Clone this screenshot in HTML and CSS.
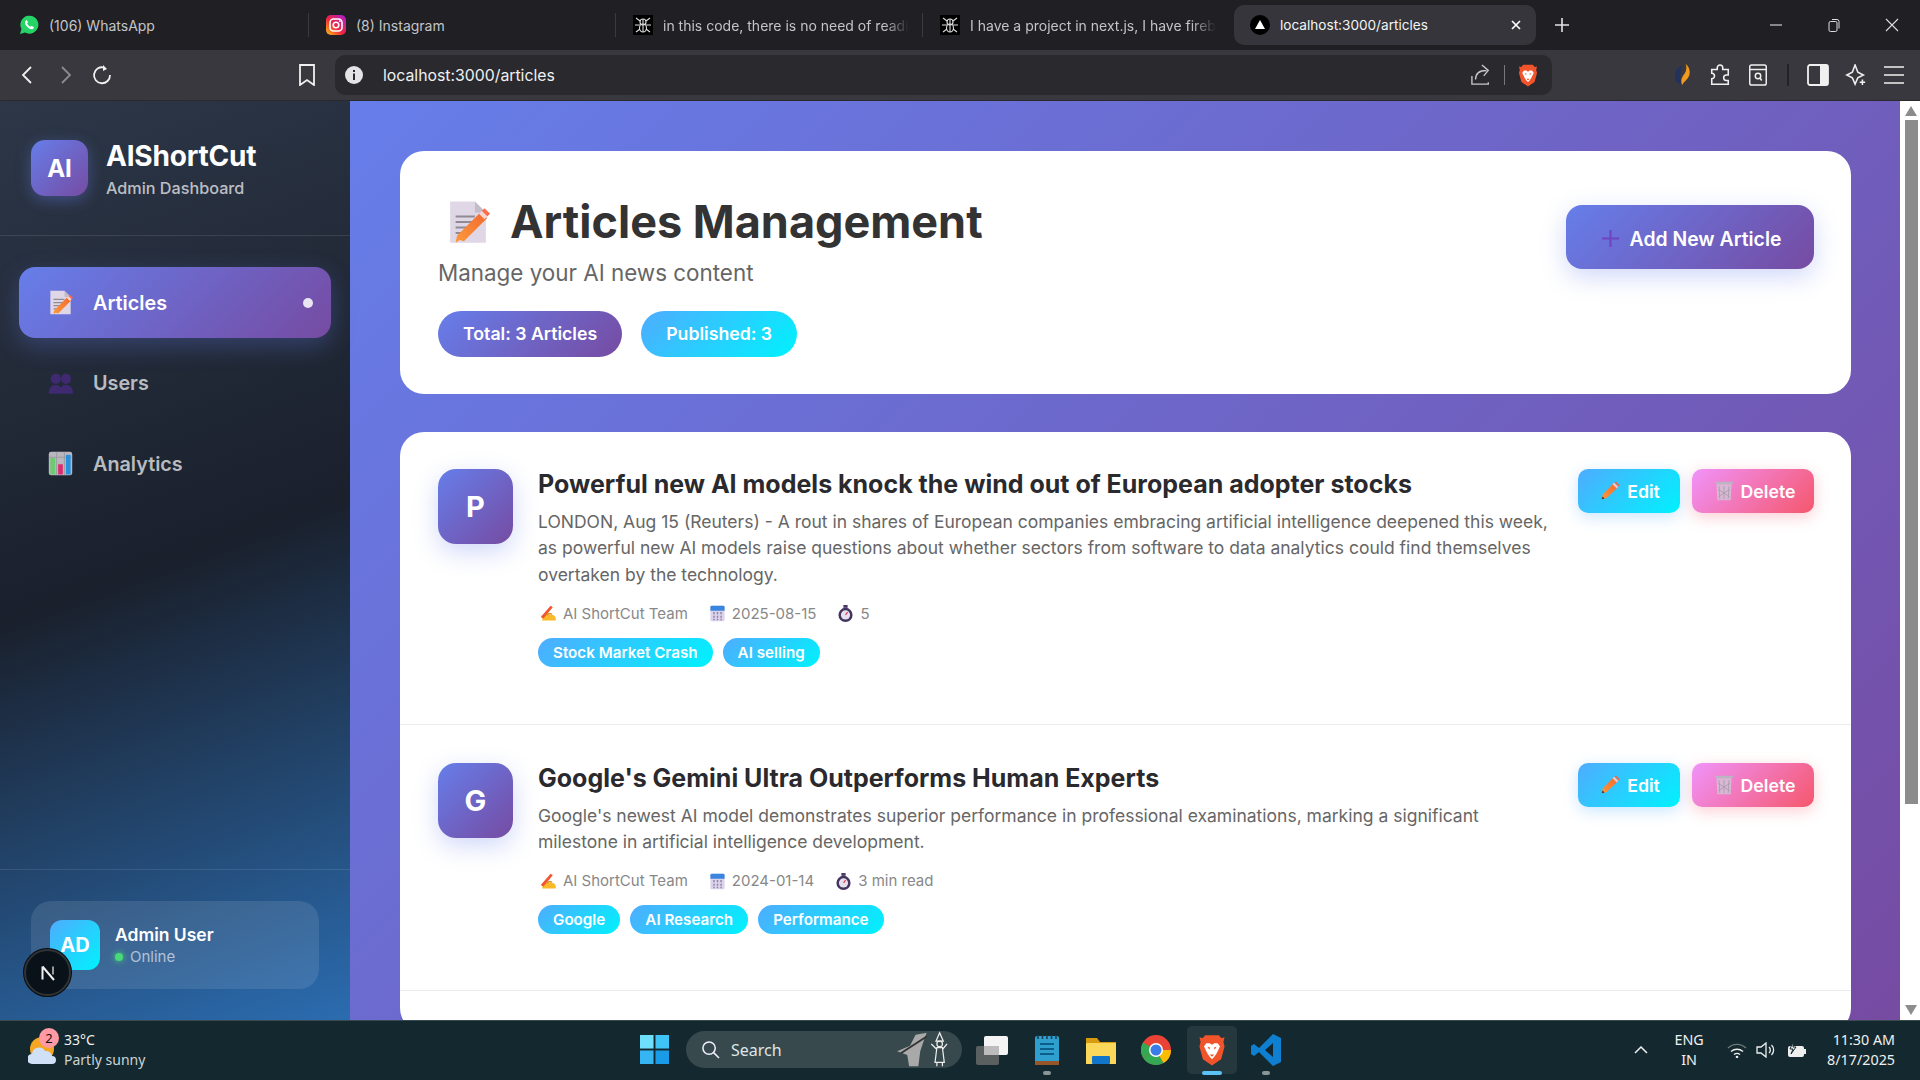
FILE: index.html
```html
<!DOCTYPE html>
<html lang="en">
<head>
<meta charset="utf-8">
<title>Articles Management</title>
<link rel="stylesheet" href="styles.css">
</head>
<body>
<svg class="defs" width="0" height="0" aria-hidden="true">
  <defs>
    <linearGradient id="pen" x1="0" y1="1" x2="1" y2="0"><stop offset="0" stop-color="#fb9a3c"/><stop offset="1" stop-color="#f4672f"/></linearGradient>
    <linearGradient id="ig" x1="0" y1="1" x2="1" y2="0"><stop offset="0" stop-color="#fdc30f"/><stop offset=".45" stop-color="#f0243f"/><stop offset="1" stop-color="#a51fd8"/></linearGradient>
    <symbol id="i-doc" viewBox="0 0 32 32">
      <path d="M3 1h18l8 8v22H3z" fill="#dfd7e6"/><path d="M21 1l8 8h-8z" fill="#c3bcca"/>
      <path d="M7 12h14M7 16h14M7 20h10M7 24h6" stroke="#8f8a94" stroke-width="1.6"/>
      <path d="M10 29l-3 2 1-5L25 9l5 4-17 17z" fill="url(#pen)"/><path d="M26 8l2-2 4 4-2 2z" fill="#ff6a4a"/><path d="M24 10l2-2 4 4-2 2z" fill="#f4d6d6"/>
    </symbol>
    <symbol id="i-users" viewBox="0 0 32 32">
      <g fill="#3f2a72"><circle cx="10" cy="10" r="6.500"/><circle cx="23" cy="10" r="6.500"/><path d="M1 29c0-8 4-11 9-11s8 3 7 11z"/><path d="M15 29c0-8 3-11 8-11s9 3 9 11z"/></g>
    </symbol>
    <symbol id="i-chart" viewBox="0 0 32 32">
      <rect x="1" y="1" width="30" height="30" rx="3" fill="#b9b6be"/><path d="M11 1v30M21 1v30M1 8h30" stroke="#98959c" stroke-width="1"/>
      <rect x="3" y="9" width="6" height="21" fill="#6cca70"/><rect x="13" y="17" width="6" height="13" fill="#d92d6f"/><rect x="23" y="5" width="6" height="25" fill="#2890dc"/>
    </symbol>
    <symbol id="i-pencil" viewBox="0 0 24 24">
      <path d="M2 22l1.500-6L16 3l5 5L8 20.500z" fill="url(#pen)"/><path d="M15 4l2-2 5 5-2 2z" fill="#f4c6c6"/><path d="M17.500 1.500L19 .5l4.500 4.500-1 2z" fill="#f4633f"/><path d="M2 22l1-3.500 2.500 2.500z" fill="#40302a"/>
    </symbol>
    <symbol id="i-trash" viewBox="0 0 24 24">
      <path d="M1 1h22l-1 3H2z" fill="#b9b5c2"/><path d="M3 4h18l-1 19H4z" fill="#d9b8d4"/><path d="M6 6l1 16M12 6v16M18 6l-1 16M5 10l14 9M19 10L5 19" stroke="#a89bae" stroke-width="1"/>
    </symbol>
    <symbol id="i-hand" viewBox="0 0 24 24">
      <path d="M3 22c0-5 3-8 7-9l9 1c3 2 4 5 3 8z" fill="#fbb829"/><path d="M1 17L15 1l3 2L5 19z" fill="#f0552f"/><path d="M10 14c2-2 5-2 7-1" stroke="#d78a10" stroke-width="2" fill="none"/>
    </symbol>
    <symbol id="i-cal" viewBox="0 0 24 24">
      <rect x="2" y="1" width="20" height="22" rx="2" fill="#dcd2ea"/><path d="M2 8V3a2 2 0 0 1 2-2h16a2 2 0 0 1 2 2v5z" fill="#3a85e0"/>
      <path d="M6 10h2v3H6zM11 10h2v3h-2zM16 10h2v3h-2zM6 15h2v3H6zM11 15h2v3h-2zM16 15h2v3h-2zM6 19.500h2v2H6zM11 19.500h2v2h-2zM16 19.500h2v2h-2z" fill="#8c82a8"/>
    </symbol>
    <symbol id="i-watch" viewBox="0 0 24 24">
      <rect x="9" y="0" width="6" height="4" fill="#4a3a68"/><circle cx="12" cy="14" r="10" fill="#43335f"/><circle cx="12" cy="14" r="6.500" fill="#e6e0ee"/><path d="M12 14l3-4" stroke="#e33d5a" stroke-width="1.800"/>
    </symbol>
    <symbol id="i-spider" viewBox="0 0 20 20">
      <rect width="20" height="20" fill="#000"/><g stroke="#ddd" stroke-width="1.100" fill="none"><circle cx="10" cy="7" r="3"/><ellipse cx="10" cy="13" rx="3.500" ry="4"/><path d="M10 4v13M3 3l4 3M17 3l-4 3M2 10h5M18 10h-5M3 17l4-3M17 17l-4-3"/></g>
    </symbol>
    <symbol id="i-brave" viewBox="0 0 24 28">
      <path d="M6 1h12l2 2.500 3-.5-1 4 1 4-3 11-8 5.500L4 22 1 11l1-4-1-4 3 .5z" fill="#f1532a"/>
      <path d="M7 8h3l2 1.500L14 8h3l2 3-3 6-2 3-2 2-2-2-2-3-3-6z" fill="#fff"/><path d="M8 11l2.500 1-1 1.500zM16 11l-2.500 1 1 1.500zM10 18h4l-2 2z" fill="#f1532a"/>
    </symbol>
  </defs>
</svg>

<div class="tabbar">
  <div class="tab">
    <svg class="fav" viewBox="0 0 20 20"><path d="M1 19l1.500-5A9 9 0 1 1 6 17.500z" fill="#25d366"/><path d="M7 5.500c-1.500 1-1.500 3 .5 5.500s4.500 4 6.500 3l1-1.800-2.500-1.400-1.200 1c-1.500-.7-2.500-2-3.200-3.300l.9-1.200L7.800 5z" fill="#fff"/></svg>
    <span class="tab-title">(106) WhatsApp</span>
  </div>
  <div class="tab">
    <svg class="fav" viewBox="0 0 20 20"><rect width="20" height="20" rx="5" fill="url(#ig)"/><rect x="4" y="4" width="12" height="12" rx="3.500" fill="none" stroke="#fff" stroke-width="1.600"/><circle cx="10" cy="10" r="2.800" fill="none" stroke="#fff" stroke-width="1.600"/><circle cx="13.800" cy="6.200" r=".9" fill="#fff"/></svg>
    <span class="tab-title">(8) Instagram</span>
  </div>
  <div class="tab">
    <svg class="fav"><use href="#i-spider"/></svg>
    <span class="tab-title tab-fade">in this code, there is no need of readi</span>
  </div>
  <div class="tab tab-last">
    <svg class="fav"><use href="#i-spider"/></svg>
    <span class="tab-title tab-fade">I have a project in next.js, I have fireb</span>
  </div>
  <div class="tab-active">
    <svg class="fav" viewBox="0 0 20 20"><circle cx="10" cy="10" r="10" fill="#000"/><path d="M10 5l5 9H5z" fill="#fff"/></svg>
    <span class="tab-title tab-title-active">localhost:3000/articles</span>
    <svg class="tab-x" viewBox="0 0 12 12"><path d="M2 2l8 8M10 2l-8 8" stroke="#fff" stroke-width="1.700"/></svg>
  </div>
  <svg class="tab-new" viewBox="0 0 14 14"><path d="M7 0v14M0 7h14" stroke="#e4e4e4" stroke-width="1.600"/></svg>
  <div class="win-ctrls">
    <svg class="win" viewBox="0 0 14 14"><path d="M1 7h12" stroke="#ddd" stroke-width="1.100"/></svg>
    <svg class="win" viewBox="0 0 14 14"><rect x="2" y="3.500" width="8" height="10" rx="1.500" fill="none" stroke="#ddd"/><path d="M5 1.500h5a2 2 0 0 1 2 2v7" fill="none" stroke="#ddd"/></svg>
    <svg class="win" viewBox="0 0 14 14"><path d="M1 1l12 12M13 1L1 13" stroke="#ddd" stroke-width="1.100"/></svg>
  </div>
</div>

<div class="toolbar">
  <div class="nav-btns">
    <svg class="tb-ic" viewBox="0 0 20 20"><path d="M13 2L5 10l8 8" fill="none" stroke="#f0f0f0" stroke-width="1.800"/></svg>
    <svg class="tb-ic" viewBox="0 0 20 20"><path d="M7 2l8 8-8 8" fill="none" stroke="#8b8b90" stroke-width="1.800"/></svg>
    <svg class="tb-ic" viewBox="0 0 20 20"><path d="M12 2.500A8 8 0 1 0 18 10" fill="none" stroke="#f0f0f0" stroke-width="1.800"/><path d="M11 0v6l4-2z" fill="#f0f0f0"/></svg>
  </div>
  <svg class="tb-book" viewBox="0 0 18 22"><path d="M2 1h14v20l-7-5-7 5z" fill="none" stroke="#f0f0f0" stroke-width="1.800"/></svg>
  <div class="address">
    <svg class="info" viewBox="0 0 18 18"><circle cx="9" cy="9" r="9" fill="#e4e4e6"/><path d="M8 4h2v2H8zM8 7.500h2V14H8z" fill="#29292e"/></svg>
    <span class="url">localhost:3000/articles</span>
    <svg class="share" viewBox="0 0 22 24"><path d="M1 13v9h18v-2M5 17c0-7 5-10 12-10M12 1l7 6-5 6" fill="none" stroke="#c8c8cc" stroke-width="1.500"/></svg>
    <span class="addr-sep"></span>
    <svg class="brave-small"><use href="#i-brave"/></svg>
  </div>
  <div class="ext">
    <svg class="ext-sol" viewBox="0 0 20 26"><path d="M9 3C3 5 0 11 2 18c1 3 4 5 7 6-2-5-3-15 0-21z" fill="#21325f"/><path d="M13 1c5 4 6 12 1 17-2 2-4 4-5 6-2-6 0-9 3-13 2-3 2-7 1-10z" fill="#f29a1f"/></svg>
    <svg class="ext-ic" viewBox="0 0 22 24"><path d="M8 4a3 3 0 0 1 6 0v2h6v6h-2a3 3 0 0 0 0 6h2v4H2v-6a3 3 0 0 0 0-6V6h6z" fill="none" stroke="#f0f0f0" stroke-width="1.700"/></svg>
    <svg class="ext-ic" viewBox="0 0 20 24"><rect x="1" y="1" width="18" height="22" rx="2" fill="none" stroke="#f0f0f0" stroke-width="1.600"/><path d="M1 6h18" stroke="#f0f0f0" stroke-width="1.600"/><circle cx="10" cy="13" r="3" fill="none" stroke="#f0f0f0" stroke-width="1.600"/><path d="M12 15l2 3" stroke="#f0f0f0" stroke-width="1.600"/></svg>
    <span class="ext-sep"></span>
    <svg class="ext-ic" viewBox="0 0 22 22"><rect x="1" y="1" width="20" height="20" rx="2" fill="none" stroke="#f0f0f0" stroke-width="1.800"/><rect x="13" y="1" width="8" height="20" fill="#f0f0f0"/></svg>
    <svg class="ext-ic" viewBox="0 0 22 24"><path d="M10 1l3 8 6 3-6 3-3 7-3-7-6-3 6-3z" fill="none" stroke="#f0f0f0" stroke-width="1.700"/><path d="M18 17v6M15 20h6" stroke="#f0f0f0" stroke-width="1.700"/></svg>
    <svg class="ext-ic" viewBox="0 0 22 20"><path d="M1 2h20M1 10h20M1 18h20" stroke="#f0f0f0" stroke-width="1.700"/></svg>
  </div>
</div>

<div class="page">
  <aside class="sidebar">
    <div class="brand">
      <div class="brand-logo">AI</div>
      <div>
        <div class="brand-name">AIShortCut</div>
        <div class="brand-sub">Admin Dashboard</div>
      </div>
    </div>
    <nav class="menu">
      <a class="menu-item menu-active"><svg class="menu-ic"><use href="#i-doc"/></svg><span>Articles</span><i class="menu-dot"></i></a>
      <a class="menu-item"><svg class="menu-ic"><use href="#i-users"/></svg><span>Users</span></a>
      <a class="menu-item"><svg class="menu-ic"><use href="#i-chart"/></svg><span>Analytics</span></a>
    </nav>
    <div class="side-foot">
      <div class="user-card">
        <div class="user-av">AD</div>
        <div class="user-info">
          <div class="user-name">Admin User</div>
          <div class="user-status"><i class="status-dot"></i>Online</div>
        </div>
      </div>
    </div>
    <div class="next-badge">
      <svg viewBox="0 0 20 20"><path d="M4.500 3.500v13M4.500 3.500L16 17" stroke="#f0f0f0" stroke-width="2" fill="none"/><path d="M15 3.500v8" stroke="#999" stroke-width="2"/></svg>
    </div>
  </aside>

  <main class="main">
    <section class="hero card">
      <div>
        <h1 class="hero-title"><svg class="hero-ic"><use href="#i-doc"/></svg>Articles Management</h1>
        <p class="hero-sub">Manage your AI news content</p>
        <div class="hero-stats">
          <span class="stat stat-purple">Total: 3 Articles</span>
          <span class="stat stat-blue">Published: 3</span>
        </div>
      </div>
      <button class="btn-add"><svg class="add-ic" viewBox="0 0 20 20"><path d="M10 0v20M0 10h20" stroke="#6d45c0" stroke-width="2.400"/></svg><span>Add New Article</span></button>
    </section>

    <section class="list card">
      <article class="item">
        <div class="item-av">P</div>
        <div class="item-body">
          <h2 class="item-title">Powerful new AI models knock the wind out of European adopter stocks</h2>
          <p class="item-text">LONDON, Aug 15 (Reuters) - A rout in shares of European companies embracing artificial intelligence deepened this week, as powerful new AI models raise questions about whether sectors from software to data analytics could find themselves overtaken by the technology.</p>
          <div class="meta">
            <span class="meta-i"><svg class="meta-ic"><use href="#i-hand"/></svg>AI ShortCut Team</span>
            <span class="meta-i"><svg class="meta-ic"><use href="#i-cal"/></svg>2025-08-15</span>
            <span class="meta-i"><svg class="meta-ic"><use href="#i-watch"/></svg>5</span>
          </div>
          <div class="tags"><span class="tag">Stock Market Crash</span><span class="tag">AI selling</span></div>
        </div>
        <div class="actions">
          <button class="btn btn-edit"><svg class="btn-ic"><use href="#i-pencil"/></svg>Edit</button>
          <button class="btn btn-del"><svg class="btn-ic"><use href="#i-trash"/></svg>Delete</button>
        </div>
      </article>
      <article class="item">
        <div class="item-av">G</div>
        <div class="item-body">
          <h2 class="item-title">Google's Gemini Ultra Outperforms Human Experts</h2>
          <p class="item-text">Google's newest AI model demonstrates superior performance in professional examinations, marking a significant milestone in artificial intelligence development.</p>
          <div class="meta">
            <span class="meta-i"><svg class="meta-ic"><use href="#i-hand"/></svg>AI ShortCut Team</span>
            <span class="meta-i"><svg class="meta-ic"><use href="#i-cal"/></svg>2024-01-14</span>
            <span class="meta-i"><svg class="meta-ic"><use href="#i-watch"/></svg>3 min read</span>
          </div>
          <div class="tags"><span class="tag">Google</span><span class="tag">AI Research</span><span class="tag">Performance</span></div>
        </div>
        <div class="actions">
          <button class="btn btn-edit"><svg class="btn-ic"><use href="#i-pencil"/></svg>Edit</button>
          <button class="btn btn-del"><svg class="btn-ic"><use href="#i-trash"/></svg>Delete</button>
        </div>
      </article>
    </section>
  </main>

  <div class="scrollbar">
    <svg class="sb-arrow" viewBox="0 0 12 10"><path d="M6 0l6 10H0z" fill="#8c8c8c"/></svg>
    <div class="sb-thumb"></div>
    <svg class="sb-arrow" viewBox="0 0 12 10"><path d="M6 10L0 0h12z" fill="#8c8c8c"/></svg>
  </div>
</div>

<footer class="taskbar">
  <div class="tb-left">
    <div class="weather">
      <svg class="weather-ic" viewBox="0 0 28 30"><circle cx="14" cy="14" r="12" fill="#f5a623"/><path d="M4 29a5 5 0 0 1 0-10 7 7 0 0 1 13-3 6 6 0 0 1 7 5 4 4 0 0 1 0 8z" fill="#cfe0f7"/></svg>
      <span class="weather-badge">2</span>
    </div>
    <div class="weather-text"><div>33°C</div><div class="weather-sub">Partly sunny</div></div>
  </div>
  <div class="tb-center">
    <svg class="start" viewBox="0 0 30 30"><path d="M0 0h14v14H0z" fill="#6fe0fb"/><path d="M16 0h14v14H16z" fill="#3fc4f5"/><path d="M0 16h14v14H0z" fill="#35b6f2"/><path d="M16 16h14v14H16z" fill="#1a9be8"/></svg>
    <div class="search">
      <svg class="search-ic" viewBox="0 0 20 20"><circle cx="8.500" cy="8.500" r="6.500" fill="none" stroke="#eef" stroke-width="1.600"/><path d="M13 13l6 6" stroke="#eef" stroke-width="1.600"/></svg>
      <span>Search</span>
      <svg class="search-art" viewBox="0 0 60 40"><path d="M2 22l14-6 6-12 12-2-3 8-4 12-2 16H15l-2-12z" fill="#a9a9a9"/><path d="M6 24L34 6" stroke="#333" stroke-width="2"/><g fill="none" stroke="#eee" stroke-width="1.300"><path d="M48 2l-4 9h8z"/><circle cx="48" cy="14" r="3"/><path d="M45 18h6l2 16h-10zM45 20l-6-6M51 20l5-6M45 34v4M51 34v4"/></g></svg>
    </div>
    <span class="tb-app tb-task"><svg viewBox="0 0 34 30" width="34" height="30"><rect x="1" y="11" width="23" height="19" rx="2" fill="#5a5f60"/><rect x="9" y="1" width="24" height="19" rx="2" fill="#f4f4f4"/><rect x="9" y="11" width="15" height="9" fill="#bcbcbc"/></svg></span>
    <span class="tb-app tb-note"><svg viewBox="0 0 24 32" width="24" height="32"><rect y="2" width="24" height="29" rx="2" fill="#2f9fd0"/><rect y="27" width="24" height="4" fill="#96562a"/><path d="M5 10h14M5 15h14M5 20h14" stroke="#0b5f8a" stroke-width="2"/><path d="M3 1v4M7.500 1v4M12 1v4M16.500 1v4M21 1v4" stroke="#1d3a4a" stroke-width="1.500"/></svg><i class="run"></i></span>
    <span class="tb-app tb-folder"><svg viewBox="0 0 30 28" width="30" height="28"><path d="M0 2h11l3 4h16v22H0z" fill="#d89b10"/><rect y="7" width="30" height="21" rx="1" fill="#fbd75a"/><rect x="6" y="20" width="18" height="8" rx="1" fill="#1176c9"/></svg></span>
    <span class="tb-app tb-chrome"><svg viewBox="0 0 30 30" width="30" height="30"><circle cx="15" cy="15" r="15" fill="#ea4335"/><path d="M15 15L2 22.500A15 15 0 0 1 2 7.500z" fill="#34a853"/><path d="M2 22.500L15 15l7.500 13A15 15 0 0 1 2 22.500z" fill="#34a853"/><path d="M15 15h15a15 15 0 0 1-7.500 13z" fill="#fbbc04"/><circle cx="15" cy="15" r="7" fill="#fff"/><circle cx="15" cy="15" r="5.500" fill="#3b7de8"/></svg></span>
    <span class="tb-app tb-brave"><svg class="brave-tb"><use href="#i-brave"/></svg><i class="run run-active"></i></span>
    <span class="tb-app tb-code"><svg viewBox="0 0 30 32" width="30" height="32"><path d="M22 0l8 4v24l-8 4L8 18l-5 4-3-2v-8l3-2 5 4z" fill="#0f7fd2"/><path d="M22 9l-8 7 8 7z" fill="#12262d"/></svg><i class="run"></i></span>
  </div>
  <div class="tray">
    <svg class="tray-chev" viewBox="0 0 14 8"><path d="M1 7l6-6 6 6" fill="none" stroke="#eee" stroke-width="1.500"/></svg>
    <div class="tray-lang"><div>ENG</div><div>IN</div></div>
    <svg class="tray-ic tray-wifi" viewBox="0 0 20 16"><path d="M1 6a13 13 0 0 1 18 0" fill="none" stroke="#6c7a7c" stroke-width="1.400"/><path d="M4 9.500a9 9 0 0 1 12 0M7 12.500a5 5 0 0 1 6 0" fill="none" stroke="#eee" stroke-width="1.400"/><circle cx="10" cy="15" r="1.300" fill="#eee"/></svg>
    <svg class="tray-ic" viewBox="0 0 20 16"><path d="M1 5h4l5-4v14l-5-4H1z" fill="none" stroke="#eee" stroke-width="1.300"/><path d="M13 5a4 4 0 0 1 0 6M15.500 3a7 7 0 0 1 0 10" fill="none" stroke="#eee" stroke-width="1.300"/></svg>
    <svg class="tray-ic" viewBox="0 0 20 16"><rect x="1" y="4" width="16" height="11" rx="2" fill="#eee"/><rect x="17" y="7" width="2" height="5" fill="#eee"/><path d="M6 0L3 7h3l-2 5 5-7H6z" fill="#eee" stroke="#14292f"/></svg>
    <div class="tray-clock"><div>11:30 AM</div><div>8/17/2025</div></div>
  </div>
</footer>
</body>
</html>
```

FILE: styles.css
```css
* { box-sizing: border-box; }
html, body { margin: 0; height: 100%; overflow: hidden; }
body { font-family: Inter, "Noto Sans", sans-serif; display: flex; flex-direction: column; background: #14292f; }
.defs { position: absolute; }
p, h1, h2 { margin: 0; }

/* browser chrome */
.tabbar { height: 50px; background: #1f1f24; display: flex; align-items: center; padding-left: 2px; flex: none; }
.tab { width: 307px; height: 24px; padding-left: 17px; display: flex; align-items: center; border-right: 1px solid #3a3a40; }
.tab-last { border-right: 0; width: 311px; }
.fav { width: 20px; height: 20px; flex: none; }
.tab-title { margin-left: 10px; font-size: 14px; color: #c4c4c8; white-space: nowrap; }
.tab-fade { -webkit-mask-image: linear-gradient(90deg, #000 90%, transparent); mask-image: linear-gradient(90deg, #000 90%, transparent); }
.tab-active { width: 302px; height: 40px; margin-top: -1px; background: #35353b; border-radius: 10px; display: flex; align-items: center; padding-left: 16px; }
.tab-title-active { color: #f4f4f4; flex: 1; font-size: 13.600px; }
.tab-x { width: 12px; height: 12px; margin-right: 14px; }
.tab-new { width: 14px; height: 14px; margin-left: 19px; }
.win-ctrls { margin-left: auto; display: flex; gap: 44px; padding-right: 21px; }
.win { width: 14px; height: 14px; display: block; }

.toolbar { height: 51px; background: #38383e; border-bottom: 1px solid #29292e; display: flex; align-items: center; flex: none; padding-left: 18px; }
.nav-btns { display: flex; gap: 17px; width: 280px; }
.tb-ic { width: 20px; height: 20px; }
.tb-book { width: 18px; height: 22px; }
.address { width: 1217px; height: 40px; margin-left: 19px; background: #29292e; border-radius: 10px; display: flex; align-items: center; padding: 0 14px 0 10px; flex: none; }
.info { width: 18px; height: 18px; }
.url { margin-left: 20px; font-size: 15.800px; color: #f0f0f0; flex: 1; }
.share { width: 20px; height: 22px; }
.addr-sep { width: 1px; height: 20px; background: #77777c; margin: 0 13px; }
.brave-small { width: 20px; height: 23px; }
.ext { display: flex; align-items: center; gap: 16px; margin-left: 122px; }
.ext-sol { width: 20px; height: 24px; margin-left: -1px; }
.ext-ic { width: 22px; height: 22px; }
.ext-sep { width: 2px; height: 22px; background: #232327; margin: 0 2px; }

/* page */
.page { flex: 1; display: flex; min-height: 0; position: relative; }
.sidebar { width: 350px; flex: none; display: flex; flex-direction: column; background: linear-gradient(160deg, #2d3748 0%, #1a202c 50%, #2b6cb0 100%); position: relative; }
.brand { height: 135px; flex: none; padding: 39px 31px 0; display: flex; gap: 18px; border-bottom: 1px solid rgba(255, 255, 255, .1); }
.brand-logo { width: 57px; height: 56px; border-radius: 14px; background: linear-gradient(135deg, #667eea, #764ba2); box-shadow: 0 4px 15px rgba(102, 126, 234, .4); display: flex; align-items: center; justify-content: center; color: #fff; font-size: 24px; font-weight: 700; }
.brand-name { font-size: 28px; font-weight: 700; color: #fff; line-height: 34px; margin-top: -1px; letter-spacing: -.2px; }
.brand-sub { font-size: 16.200px; font-weight: 500; color: rgba(255, 255, 255, .7); line-height: 20px; margin-top: 5px; }
.menu { flex: 1; padding: 31px 19px 0; display: flex; flex-direction: column; gap: 9.500px; }
.menu-item { height: 71px; border-radius: 16px; display: flex; align-items: center; padding-left: 29px; gap: 20px; font-size: 19.800px; font-weight: 600; color: rgba(255, 255, 255, .7); }
.menu-active { color: #fff; background: linear-gradient(135deg, #667eea, #764ba2); box-shadow: 0 8px 25px rgba(102, 126, 234, .3); }
.menu-ic { width: 25px; height: 25px; flex: none; }
.menu-dot { width: 10px; height: 10px; border-radius: 50%; background: rgba(255, 255, 255, .85); margin-left: auto; margin-right: 18px; }
.side-foot { flex: none; height: 151px; border-top: 1px solid rgba(255, 255, 255, .1); padding: 31px 31px 0; }
.user-card { height: 88px; border-radius: 20px; background: rgba(255, 255, 255, .1); display: flex; align-items: center; padding-left: 19px; gap: 15px; }
.user-av { width: 50px; height: 50px; border-radius: 12px; background: linear-gradient(135deg, #4facfe, #00f2fe); display: flex; align-items: center; justify-content: center; color: #fff; font-size: 20px; font-weight: 700; }
.user-info { padding-top: 2px; }
.user-name { font-size: 17.500px; font-weight: 600; color: #fff; line-height: 22px; }
.user-status { font-size: 15px; color: rgba(255, 255, 255, .6); line-height: 22px; display: flex; align-items: center; gap: 7px; }
.status-dot { width: 8px; height: 8px; border-radius: 50%; background: #48d978; box-shadow: 0 0 6px #48d978; }
.next-badge { position: absolute; left: 24px; bottom: 24px; width: 47px; height: 47px; border-radius: 50%; background: #0a1219; border: 2px solid #2e3338; box-shadow: 0 0 0 1px #0a0a0a; display: flex; align-items: center; justify-content: center; }
.next-badge svg { width: 20px; height: 20px; }

.main { flex: 1; min-width: 0; overflow: hidden; padding: 50px 49px 0 50px; background: linear-gradient(135deg, #667eea 0%, #764ba2 100%); }
.card { background: #fff; border-radius: 24px; }
.hero { height: 243px; padding: 38px 37px 37px 38px; display: flex; justify-content: space-between; align-items: flex-start; margin-bottom: 38px; }
.hero-title { font-size: 45px; font-weight: 700; line-height: 66px; color: #333; display: flex; align-items: center; }
.hero-ic { width: 44px; height: 44px; margin: 0 20px 0 8px; flex: none; }
.hero-sub { font-size: 22.400px; line-height: 28px; color: #666; margin-top: 4px; }
.hero-stats { display: flex; gap: 19px; margin-top: 23.500px; }
.stat { height: 46px; border-radius: 23px; padding: 0 25px; display: flex; align-items: center; color: #fff; font-size: 17.700px; font-weight: 600; }
.stat-purple { background: linear-gradient(135deg, #667eea, #764ba2); }
.stat-blue { background: linear-gradient(135deg, #4facfe, #00f2fe); }
.btn-add { width: 248px; height: 64px; margin-top: 16px; padding: 3px 0 0 3px; border: 0; border-radius: 16px; background: linear-gradient(135deg, #667eea, #764ba2); box-shadow: 0 8px 25px rgba(102, 126, 234, .3); color: #fff; font: 600 19.400px Inter, sans-serif; display: flex; align-items: center; justify-content: center; gap: 11px; }
.add-ic { width: 17px; height: 17px; }

.list { min-height: 600px; }
.item { display: flex; padding: 37px 37px 0 38px; height: 293px; border-bottom: 1px solid #e9ecef; }
.item + .item { height: 266px; padding-top: 38px; }
.item-av { width: 75px; height: 75px; flex: none; border-radius: 18px; background: linear-gradient(135deg, #667eea, #764ba2); box-shadow: 0 8px 25px rgba(102, 126, 234, .3); display: flex; align-items: center; justify-content: center; color: #fff; font-size: 29px; font-weight: 700; }
.item-body { flex: 1; min-width: 0; margin-left: 25px; }
.item-title { font-size: 25px; font-weight: 700; line-height: 30px; color: #2a2a2e; }
.item-text { font-size: 17.500px; line-height: 26.400px; color: #666; margin-top: 10px; }
.meta { display: flex; gap: 19px; margin-top: 15.500px; font-size: 15px; line-height: 20px; color: #888; }
.meta-i { display: flex; align-items: center; gap: 6px; }
.meta-ic { width: 17px; height: 17px; margin-left: 2px; flex: none; }
.tags { display: flex; gap: 10px; margin-top: 14px; }
.tag { height: 29px; border-radius: 15px; padding: 0 15px; display: flex; align-items: center; color: #fff; font-size: 15.200px; font-weight: 600; background: linear-gradient(135deg, #4facfe, #00f2fe); }
.actions { display: flex; gap: 12px; margin-left: 30px; flex: none; align-items: flex-start; }
.btn { height: 44px; border: 0; border-radius: 10px; color: #fff; font: 600 17.700px Inter, sans-serif; display: flex; align-items: center; justify-content: center; gap: 7px; padding: 0; }
.btn-edit { width: 102px; padding-left: 2px; background: linear-gradient(135deg, #4facfe, #00f2fe); box-shadow: 0 4px 15px rgba(79, 172, 254, .3); }
.btn-del { width: 122px; padding-left: 3px; background: linear-gradient(135deg, #f093fb, #f5576c); box-shadow: 0 4px 15px rgba(245, 87, 108, .3); }
.btn-ic { width: 20px; height: 20px; flex: none; }

.scrollbar { width: 20px; flex: none; background: #fff; display: flex; flex-direction: column; align-items: flex-end; padding: 5px 2px 5px 5px; }
.sb-arrow { width: 12px; height: 10px; flex: none; margin-right: 1px; }
.sb-thumb { width: 13px; height: 684px; background: #8c8c8c; margin: 4px 0 auto; }

/* taskbar */
.taskbar { height: 60px; flex: none; background: #14292f; border-top: 1px solid #3a4a4e; padding-bottom: 2px; display: flex; align-items: center; color: #f0f0f0; font-size: 14px; font-family: "Noto Sans", sans-serif; position: relative; }
.tb-left { width: 640px; flex: none; display: flex; align-items: center; padding-left: 28px; }
.weather { position: relative; width: 28px; height: 30px; margin-right: 8px; }
.weather-ic { width: 28px; height: 30px; }
.weather-badge { position: absolute; top: -7px; left: 11px; width: 20px; height: 20px; border-radius: 50%; background: #ff9aa5; color: #111; font-size: 13px; line-height: 20px; text-align: center; }
.weather-text { line-height: 20px; }
.weather-sub { color: #ccd3d5; }
.tb-center { display: flex; align-items: center; }
.start { width: 29px; height: 29px; flex: none; }
.search { width: 276px; height: 37px; margin-left: 17px; border-radius: 19px; background: #37494d; display: flex; align-items: center; padding-left: 15px; color: #dfe5e6; font-size: 16px; position: relative; }
.search-ic { width: 19px; height: 19px; margin-right: 11px; }
.search-art { position: absolute; right: 7px; top: 0; width: 64px; height: 37px; }
.tb-app { display: flex; position: relative; align-items: center; justify-content: center; flex: none; height: 48px; }
.tb-task { margin-left: 13px; }
.tb-note { margin-left: 26px; }
.tb-folder { margin-left: 27px; }
.tb-chrome { margin-left: 25px; }
.tb-brave { margin-left: 16px; width: 50px; background: #25383d; border-radius: 5px; }
.brave-tb { width: 28px; height: 32px; }
.tb-code { margin-left: 14px; }
.run { position: absolute; bottom: -1px; left: 50%; margin-left: -4px; width: 8px; height: 4px; border-radius: 2px; background: #8a9597; }
.run-active { width: 20px; margin-left: -10px; background: #5cc1f5; }
.tray { margin-left: auto; display: flex; align-items: center; padding-right: 25px; }
.tray-chev { width: 14px; height: 8px; margin-right: 24px; }
.tray-lang { text-align: center; line-height: 20px; width: 34px; margin-right: 21px; font-size: 14.300px; }
.tray-ic { width: 20px; height: 16px; margin-right: 11px; }
.tray-wifi { margin-right: 9px; }
.tray-clock { text-align: right; line-height: 20px; margin-left: 9px; font-size: 14.300px; }
```
